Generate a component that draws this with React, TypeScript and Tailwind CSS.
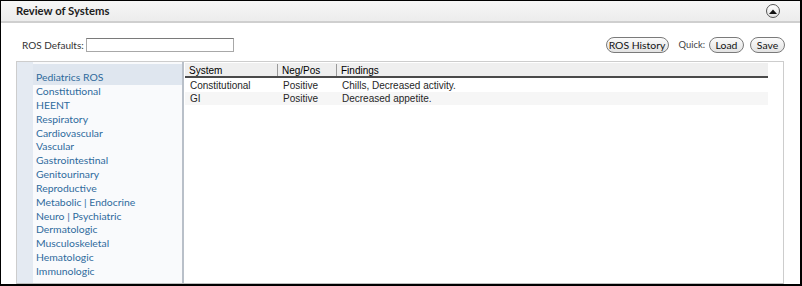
import React from "react";

const navItems = [
  "Constitutional",
  "HEENT",
  "Respiratory",
  "Cardiovascular",
  "Vascular",
  "Gastrointestinal",
  "Genitourinary",
  "Reproductive",
  "Metabolic | Endocrine",
  "Neuro | Psychiatric",
  "Dermatologic",
  "Musculoskeletal",
  "Hematologic",
  "Immunologic",
];

const rows = [
  { system: "Constitutional", np: "Positive", findings: "Chills, Decreased activity.", alt: false },
  { system: "GI", np: "Positive", findings: "Decreased appetite.", alt: true },
];

function PillButton({ children, w }: { children: React.ReactNode; w: string }) {
  return (
    <button
      className={`${w} h-[16px] rounded-full border border-[#7a7a7a] bg-gradient-to-b from-[#fbfbfb] to-[#e3e3e3] text-[10.4px] leading-[14px] text-[#111] flex items-center justify-center whitespace-nowrap`}
    >
      {children}
    </button>
  );
}

export default function App() {
  return (
    <div
      className="w-[802px] h-[286px] bg-white border-l border-t border-r-2 border-b-2 border-black flex flex-col overflow-hidden text-[#222]"
      style={{ fontFamily: "Lato, 'Open Sans', sans-serif" }}
    >
      {/* Header */}
      <div className="h-[22px] shrink-0 bg-gradient-to-b from-[#f6f6f6] to-[#ececec] border-b-2 border-[#cfcfcf] flex items-center justify-between pl-[15px] pr-[20px]">
        <span className="text-[11.3px] font-bold text-[#1c1c1c] leading-none">Review of Systems</span>
        <span className="w-[14px] h-[14px] rounded-full border border-[#555] bg-gradient-to-b from-white to-[#e2e2e2] flex items-center justify-center">
          <svg width="8" height="5" viewBox="0 0 8 5">
            <polygon points="0,5 4,0.5 8,5" fill="#111" />
          </svg>
        </span>
      </div>

      {/* Toolbar */}
      <div className="h-[16px] mt-[14px] shrink-0 flex items-center justify-between pl-[21px] pr-[15px]">
        <div className="flex items-center gap-[2px]">
          <span className="text-[10px] text-[#333]">ROS Defaults:</span>
          <input className="w-[148px] h-[14px] border border-[#a8a8a8] border-t-[#7a7a7a] bg-white outline-none" />
        </div>
        <div className="flex items-center">
          <PillButton w="w-[63px]">ROS History</PillButton>
          <span className="ml-[10px] mr-[4px] text-[9.4px] text-[#444]">Quick:</span>
          <PillButton w="w-[35px]">Load</PillButton>
          <span className="w-[6px]" />
          <PillButton w="w-[35px]">Save</PillButton>
        </div>
      </div>

      {/* Panel */}
      <div className="mt-[8px] ml-[15px] mr-[16px] flex-1 min-h-0 border border-[#cdcdcd] border-b-[#bdbdbd] flex">
        {/* Nav */}
        <div className="w-[167px] shrink-0 bg-[#e4eaf2] flex border-r-2 border-r-[#b9c0c9]">
          <div className="w-[16px] shrink-0" />
          <div className="flex-1 bg-[#f9fafc] pt-[2px] text-[10.4px] leading-[13.85px] text-[#2f6a9c]">
            <div className="h-[21px] bg-[#dfe6ef] pt-[7px] pl-[3px]">Pediatrics ROS</div>
            {navItems.map((n) => (
              <div key={n} className="pl-[3px] h-[13.85px]">
                {n}
              </div>
            ))}
          </div>
        </div>

        {/* Table area */}
        <div className="flex-1 pt-[1px] pl-[1px] pr-[15px]">
          <div
            className="text-[10px] leading-[13px] text-[#262626]"
            style={{ fontFamily: "'Liberation Sans', Arial, sans-serif" }}
          >
            <div className="flex h-[15px] pt-[1px] bg-[#efefef] border-b-2 border-[#4a4a4a] text-black">
              <div className="w-[93px] pl-[4px] border-r border-[#9a9a9a] flex items-center">System</div>
              <div className="w-[59px] pl-[4px] border-r border-[#9a9a9a] flex items-center">Neg/Pos</div>
              <div className="flex-1 pl-[4px] flex items-center">Findings</div>
            </div>
            <div className="pt-[1px]">
              {rows.map((r) => (
                <div key={r.system} className={`flex h-[13px] ${r.alt ? "bg-[#f6f6f6]" : ""}`}>
                  <div className="w-[93px] pl-[5px]">{r.system}</div>
                  <div className="w-[59px] pl-[5px]">{r.np}</div>
                  <div className="flex-1 pl-[5px]">{r.findings}</div>
                </div>
              ))}
            </div>
          </div>
        </div>
      </div>
    </div>
  );
}
